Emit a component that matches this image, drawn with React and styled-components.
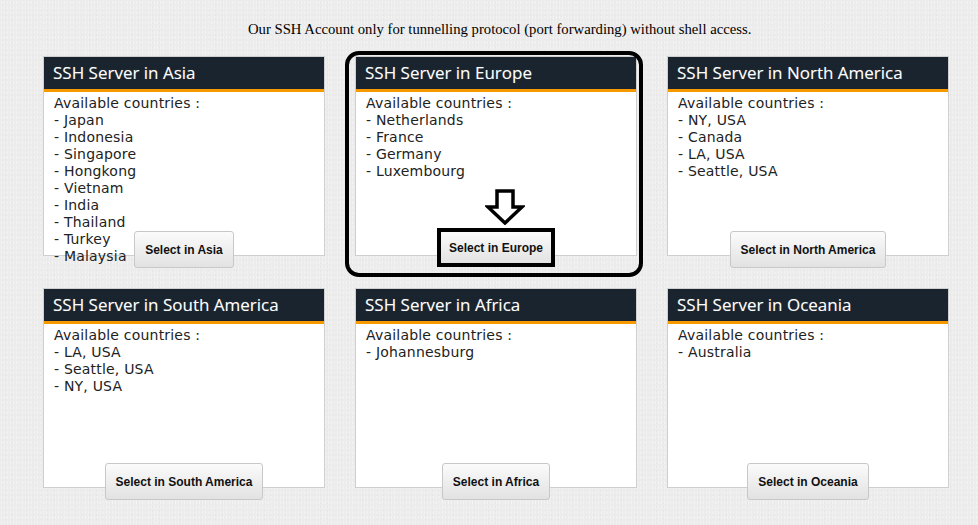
import React from "react";
import styled, { createGlobalStyle } from "styled-components";

const servers = [
  { region: "Asia", countries: ["Japan", "Indonesia", "Singapore", "Hongkong", "Vietnam", "India", "Thailand", "Turkey", "Malaysia"] },
  { region: "Europe", countries: ["Netherlands", "France", "Germany", "Luxembourg"], marked: true },
  { region: "North America", countries: ["NY, USA", "Canada", "LA, USA", "Seattle, USA"] },
  { region: "South America", countries: ["LA, USA", "Seattle, USA", "NY, USA"] },
  { region: "Africa", countries: ["Johannesburg"] },
  { region: "Oceania", countries: ["Australia"] },
];

const App = () => {
  return (
    <>
      <GlobalStyle />
      <Page>
        <Notice>Our SSH Account only for tunnelling protocol (port forwarding) without shell access.</Notice>
        <Grid>
          {servers.map((s) => (
            <Card key={s.region}>
              {s.marked && <Highlight />}
              <Panel>
                <PanelTitle>SSH Server in {s.region}</PanelTitle>
                <PanelBody>
                  <div>Available countries :</div>
                  {s.countries.map((c) => (
                    <div key={c}>- {c}</div>
                  ))}
                </PanelBody>
              </Panel>
              {s.marked && (
                <Arrow width="40" height="36" viewBox="0 0 40 36">
                  <path
                    d="M12 2 H28 V18 H37 L20 34 L3 18 H12 Z"
                    fill="#fff"
                    stroke="#000"
                    strokeWidth="3.5"
                    strokeLinejoin="miter"
                  />
                </Arrow>
              )}
              <SelectButton $marked={s.marked}>Select in {s.region}</SelectButton>
            </Card>
          ))}
        </Grid>
      </Page>
    </>
  );
};

const GlobalStyle = createGlobalStyle`
  html, body {
    margin: 0;
    padding: 0;
    background: #ededed;
  }
`;

const Page = styled.div`
  width: 978px;
  height: 525px;
  overflow: hidden;
  background-color: #ececec;
  background-image:
    radial-gradient(rgba(255, 255, 255, 0.35) 1px, transparent 1px),
    radial-gradient(rgba(0, 0, 0, 0.02) 1px, transparent 1px);
  background-size: 3px 5px, 7px 4px;
  background-position: 0 0, 2px 1px;
  padding: 21px 30px 0 43px;
  box-sizing: border-box;
`;

const Notice = styled.p`
  margin: 0 0 18px;
  padding-left: 205px;
  font-family: "Liberation Serif", "Times New Roman", serif;
  font-size: 14.7px;
  line-height: 17px;
  color: #000;
`;

const Grid = styled.div`
  display: grid;
  grid-template-columns: repeat(3, 282px);
  column-gap: 30px;
  row-gap: 20px;
  align-items: start;
`;

const Card = styled.div`
  position: relative;
  display: flex;
  flex-direction: column;
  align-items: center;
  height: 212px;
`;

const Highlight = styled.div`
  position: absolute;
  left: -10px;
  top: -5px;
  width: 298px;
  height: 226px;
  box-sizing: border-box;
  border: 4px solid #000;
  border-radius: 14px;
  pointer-events: none;
`;

const Panel = styled.div`
  width: 100%;
  height: 200px;
  flex-shrink: 0;
  box-sizing: border-box;
  background: #fff;
  border: 1px solid #cfcfcf;
`;

const PanelTitle = styled.div`
  height: 32px;
  padding: 0 9px;
  background: #19242e;
  border-bottom: 3px solid #f79a00;
  color: #fff;
  font-family: "Open Sans", "DejaVu Sans", sans-serif;
  font-size: 17px;
  line-height: 32px;
  text-shadow: 0 0 1px rgba(255, 255, 255, 0.3);
`;

const PanelBody = styled.div`
  padding: 3px 10px 0;
  font-family: "DejaVu Sans", Verdana, sans-serif;
  font-size: 14px;
  line-height: 17px;
  letter-spacing: 0.2px;
  color: #222;
`;

const Arrow = styled.svg`
  position: absolute;
  left: 130px;
  top: 133px;
`;

const SelectButton = styled.button`
  position: relative;
  flex-shrink: 0;
  box-sizing: border-box;
  font-family: "Liberation Sans", Arial, sans-serif;
  font-size: 12px;
  font-weight: bold;
  color: #111;
  background: linear-gradient(#fbfbfb, #e2e2e2);
  border: ${(p) => (p.$marked ? "4px solid #000" : "1px solid #c8c8c8")};
  border-radius: ${(p) => (p.$marked ? "0" : "3px")};
  height: ${(p) => (p.$marked ? "39px" : "37px")};
  margin-top: ${(p) => (p.$marked ? "-28px" : "-25px")};
  padding: ${(p) => (p.$marked ? "0 8px" : "0 10px")};
  cursor: pointer;
`;

export default App;
